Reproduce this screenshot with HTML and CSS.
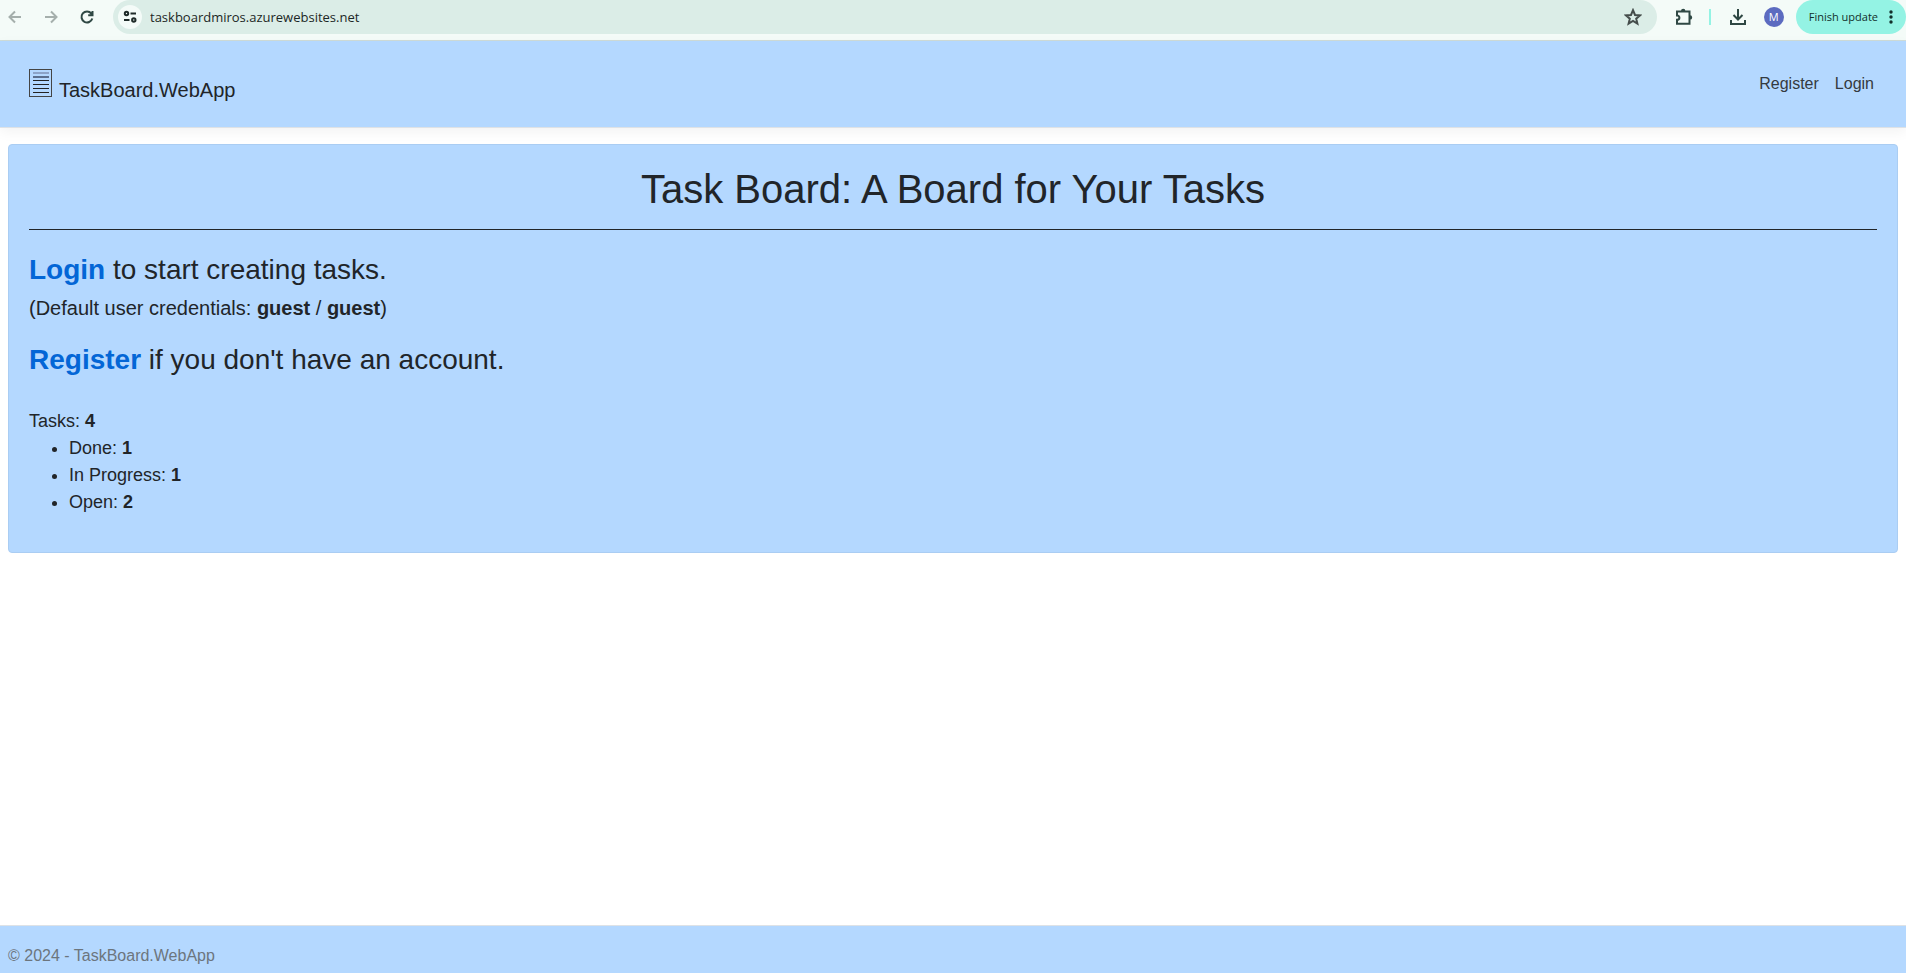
FILE: index.html
```html
<!DOCTYPE html>
<html lang="en">
<head>
<meta charset="utf-8">
<title>Task Board</title>
<link rel="stylesheet" href="styles.css">
</head>
<body>
<div class="browser">
  <div class="browser-nav">
    <button class="icon-button muted" aria-label="Back"><svg width="16" height="16" viewBox="0 0 16 16"><path d="M14 8H3M8 2.5L2.5 8L8 13.5"/></svg></button>
    <button class="icon-button muted" aria-label="Forward"><svg width="16" height="16" viewBox="0 0 16 16"><path d="M2 8h11M8 2.5L13.500 8L8 13.500"/></svg></button>
    <button class="icon-button" aria-label="Reload"><svg width="16" height="16" viewBox="0 0 16 16"><path d="M13.300 9.500A5.500 5.500 0 1 1 12.300 4.500L13.500 6M13.500 2v4.300H9.200"/></svg></button>
  </div>
  <div class="address">
    <button class="site-info" aria-label="Site information"><svg width="14" height="14" viewBox="0 0 14 14"><circle cx="3.500" cy="3.500" r="1.700"/><path d="M7.500 3.500H13M1 10h5.500"/><circle cx="10.800" cy="10" r="1.700"/></svg></button>
    <input class="url" type="text" aria-label="Address" value="taskboardmiros.azurewebsites.net">
    <button class="icon-button star" aria-label="Bookmark"><svg width="18" height="18" viewBox="0 0 18 18"><path d="M9 2.200L11 7l5 .4-3.800 3.300 1.200 4.900L9 13l-4.400 2.600 1.200-4.900L2 7.400 7 7z"/></svg></button>
  </div>
  <div class="browser-tools">
    <button class="icon-button" aria-label="Extensions"><svg width="18" height="18" viewBox="0 0 18 18"><path d="M2 3.500h12.500v12.300H2v-4c3.200 0 3.200-4.300 0-4.300z"/><path class="solid" d="M6 3a2.200 2.200 0 0 1 4.400 0zM15 7.200a2.200 2.200 0 0 1 0 4.400z"/></svg></button>
    <span class="divider"></span>
    <button class="icon-button" aria-label="Downloads"><svg width="18" height="18" viewBox="0 0 18 18"><path d="M9 1v10M4.500 7L9 11.500 13.500 7M2 12v4h14v-4"/></svg></button>
    <button class="avatar" aria-label="Profile">M</button>
    <button class="update">Finish update<svg width="4" height="16" viewBox="0 0 4 16"><circle cx="2" cy="3" r="1.700"/><circle cx="2" cy="8" r="1.700"/><circle cx="2" cy="13" r="1.700"/></svg></button>
  </div>
</div>
<header class="site-header">
  <a class="brand" href="#"><svg width="23" height="28" viewBox="0 0 23 28"><rect x=".5" y=".5" width="22" height="27"/><path class="faint" d="M4 4h16"/><path class="soft" d="M4 8h16"/><path d="M4 11.500h16M4 15.500h16M4 19.500h16M4 23.500h16"/></svg>TaskBoard.WebApp</a>
  <nav class="links"><a href="#">Register</a><a href="#">Login</a></nav>
</header>
<main class="content">
  <section class="panel">
    <h1>Task Board: A Board for Your Tasks</h1>
    <hr>
    <p class="lead"><a href="#">Login</a> to start creating tasks.</p>
    <p class="hint">(Default user credentials: <b>guest</b> / <b>guest</b>)</p>
    <p class="lead">
      <a href="#">Register</a> if you don't have an account.</p>
    <div class="stats">Tasks: <b>4</b>
      <ul>
        <li>Done: <b>1</b></li>
        <li>In Progress: <b>1</b></li>
        <li>Open: <b>2</b></li>
      </ul>
    </div>
  </section>
</main>
<footer class="site-footer">© 2024 - TaskBoard.WebApp</footer>
</body>
</html>
```
FILE: styles.css
```css
* { box-sizing: border-box; }
body {
  margin: 0;
  min-height: 100vh;
  display: flex;
  flex-direction: column;
  background: #fff;
  color: #212529;
  font: 16px/24px "Liberation Sans", Arial, sans-serif;
}
a { text-decoration: none; }
button, input { border: 0; padding: 0; background: none; font: inherit; color: inherit; }
svg { fill: none; stroke: currentColor; display: block; }

.browser {
  display: flex;
  height: 41px;
  padding-bottom: 6px;
  align-items: center;
  background: #f4fbf8;
  border-bottom: 1px solid #cfdcd8;
  color: #2f4844;
  font: 13px/16px "Open Sans", "Noto Sans", sans-serif;
}
.browser svg { stroke-width: 2; }
.browser-nav { display: flex; gap: 20px; padding: 0 18px 0 7px; }
.icon-button { display: flex; }
.muted { color: #a5afac; }
.address {
  flex: 1;
  display: flex;
  align-items: center;
  height: 34px;
  padding: 0 15px 0 5px;
  border-radius: 17px;
  background: #dbede7;
}
.site-info {
  display: grid;
  place-items: center;
  width: 24px;
  height: 24px;
  border-radius: 50%;
  background: #f4fbf8;
  color: #1f2b29;
}
.url { flex: 1; margin-left: 8px; color: #1c2725; }
.star { color: #454d4b; }
.browser-tools { display: flex; align-items: center; padding-left: 18px; }
.browser .solid { fill: currentColor; stroke: none; }
.divider { width: 2px; height: 16px; margin: 0 18px 0 16px; background: #94f3e4; }
.avatar {
  width: 20px;
  height: 20px;
  margin: 0 12px 0 17px;
  border-radius: 50%;
  background: #5c6bc0;
  color: #fff;
  font-size: 11px;
}
.update {
  display: flex;
  align-items: center;
  gap: 11px;
  height: 34px;
  padding: 0 13px;
  border-radius: 17px;
  background: #94f3e4;
  color: #12302b;
  font-size: 11px;
}
.browser .update svg { fill: currentColor; stroke: none; }

.site-header {
  display: flex;
  align-items: center;
  justify-content: space-between;
  height: 87px;
  padding: 0 32px 0 29px;
  background: #b4d8ff;
  border-bottom: 1px solid #dee2e6;
  box-shadow: 0 4px 12px rgba(0, 0, 0, .05);
}
.brand { display: flex; align-items: baseline; gap: 7px; color: #212529; font-size: 20px; line-height: 20px; }
.brand rect { stroke: #444; }
.brand path { stroke: #222; stroke-width: 1; }
.brand .faint { stroke: #8ba3c8; stroke-width: 2; }
.brand .soft { stroke: #5b6f8e; stroke-width: 2; }
.links { display: flex; gap: 16px; }
.links a { color: #343a40; }

.content { flex: 1; padding: 16px 8px; }
.panel {
  padding: 20px;
  border: 1px solid #aacdf3;
  border-radius: 4px;
  background: #b4d8ff;
}
h1 { margin: 0; font-size: 40px; font-weight: 400; line-height: 48px; text-align: center; }
hr { margin: 16px 0 19px; border: 0; border-top: 1px solid #212529; }
p { margin: 0; }
.lead { font-size: 28px; line-height: 42px; }
.lead a { color: #0366d6; font-weight: 700; }
.hint { margin: 2px 0 16px; font-size: 20px; line-height: 30px; }
.stats { margin-top: 27px; font-size: 18px; line-height: 27px; }
.stats ul { margin: 0 0 16px; padding-left: 40px; }

.site-footer {
  height: 48px;
  padding: 18px 8px 0;
  background: #b4d8ff;
  border-top: 1px solid #dee2e6;
  color: #6c757d;
}
```
